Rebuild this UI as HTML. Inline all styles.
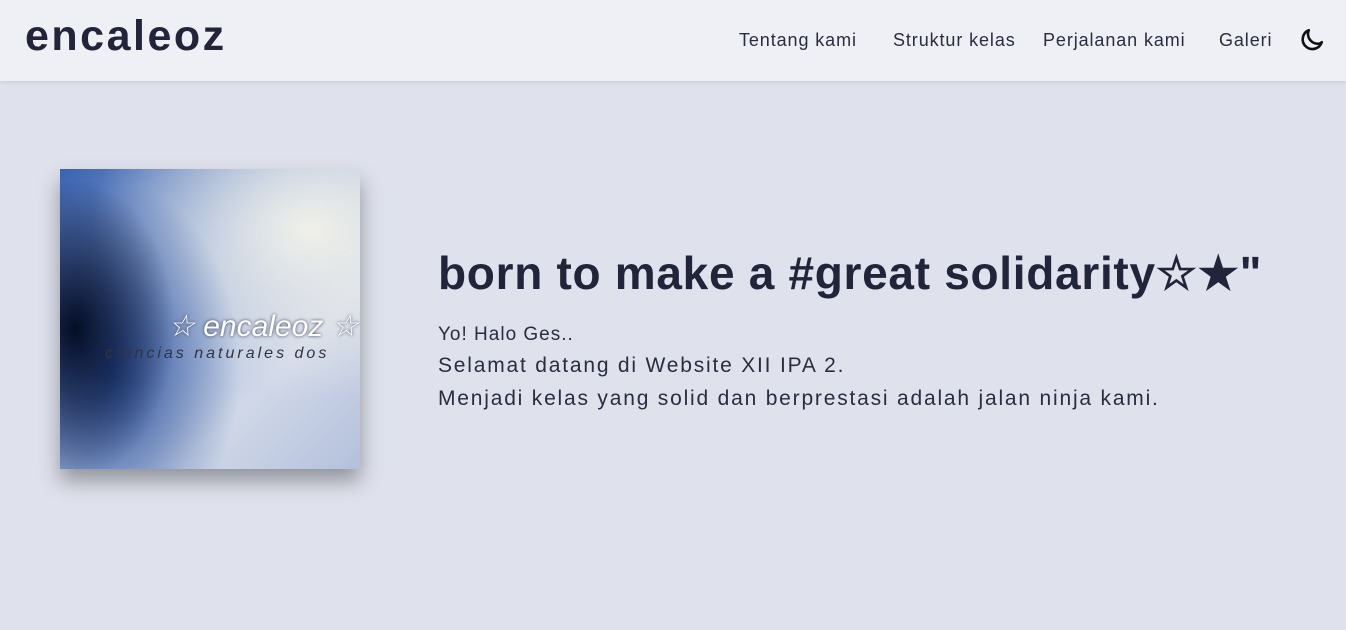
<!DOCTYPE html>
<html><head><style>
*{margin:0;padding:0;box-sizing:border-box}
body{width:1346px;height:630px;background:#dfe2ed;font-family:"Liberation Sans",sans-serif;color:#22243a;overflow:hidden;position:relative}
.nav{position:absolute;left:0;top:0;width:1346px;height:81px;background:#eff0f5;box-shadow:0 1px 4px rgba(0,0,0,.12)}
.logo{position:absolute;left:25px;top:12px;font-size:43px;font-weight:bold;letter-spacing:2.5px;color:#23243a}
.links{position:absolute;top:30px;font-size:18px;color:#2a2c40;letter-spacing:0.9px;white-space:nowrap}
.img{position:absolute;left:60px;top:169px;width:300px;height:300px;box-shadow:0 12px 20px rgba(0,0,0,.35);
background:radial-gradient(ellipse 100px 150px at 15px 160px,#050d25,transparent),
radial-gradient(ellipse 130px 190px at 50px 200px,#2a4f9a,transparent),
radial-gradient(ellipse 220px 170px at 250px 60px,#f0f0ea,transparent),
linear-gradient(135deg,#3a62b0 0%,#9ab0d8 40%,#d0d8e8 70%,#b4c0dc 100%);overflow:hidden}
h1{position:absolute;left:438px;top:246px;font-size:46px;font-weight:bold;letter-spacing:0.7px;color:#22243a;white-space:nowrap}
.p{position:absolute;left:438px;font-size:21px;color:#2a2c40;white-space:nowrap;letter-spacing:1.8px}
</style></head><body>
<div class="nav">
<div class="logo">encaleoz</div>
<div class="links" style="left:739px">Tentang kami</div>
<div class="links" style="left:893px">Struktur kelas</div>
<div class="links" style="left:1043px">Perjalanan kami</div>
<div class="links" style="left:1219px">Galeri</div>
<svg style="position:absolute;left:1299px;top:27px" width="26" height="26" viewBox="0 0 24 24"><path d="M20 15A9 9 0 0 1 9 3 9 9 0 1 0 21 14Z" fill="none" stroke="#111" stroke-width="2.4" stroke-linejoin="round"/></svg>
</div>
<div class="img">
<div style="position:absolute;left:108px;top:140px;color:#fff;font-size:30px;font-style:italic;white-space:nowrap;text-shadow:0 0 3px #335">☆ encaleoz ☆</div>
<div style="position:absolute;left:45px;top:176px;color:#334;font-size:16px;font-style:italic;letter-spacing:3px;white-space:nowrap">ciencias naturales dos</div>
</div>
<h1>born to make a #great solidarity☆★"</h1>
<div class="p" style="top:324px;font-size:19px;letter-spacing:1px">Yo! Halo Ges..</div>
<div class="p" style="top:354px">Selamat datang di Website XII IPA 2.</div>
<div class="p" style="top:387px">Menjadi kelas yang solid dan berprestasi adalah jalan ninja kami.</div>
</body></html>
